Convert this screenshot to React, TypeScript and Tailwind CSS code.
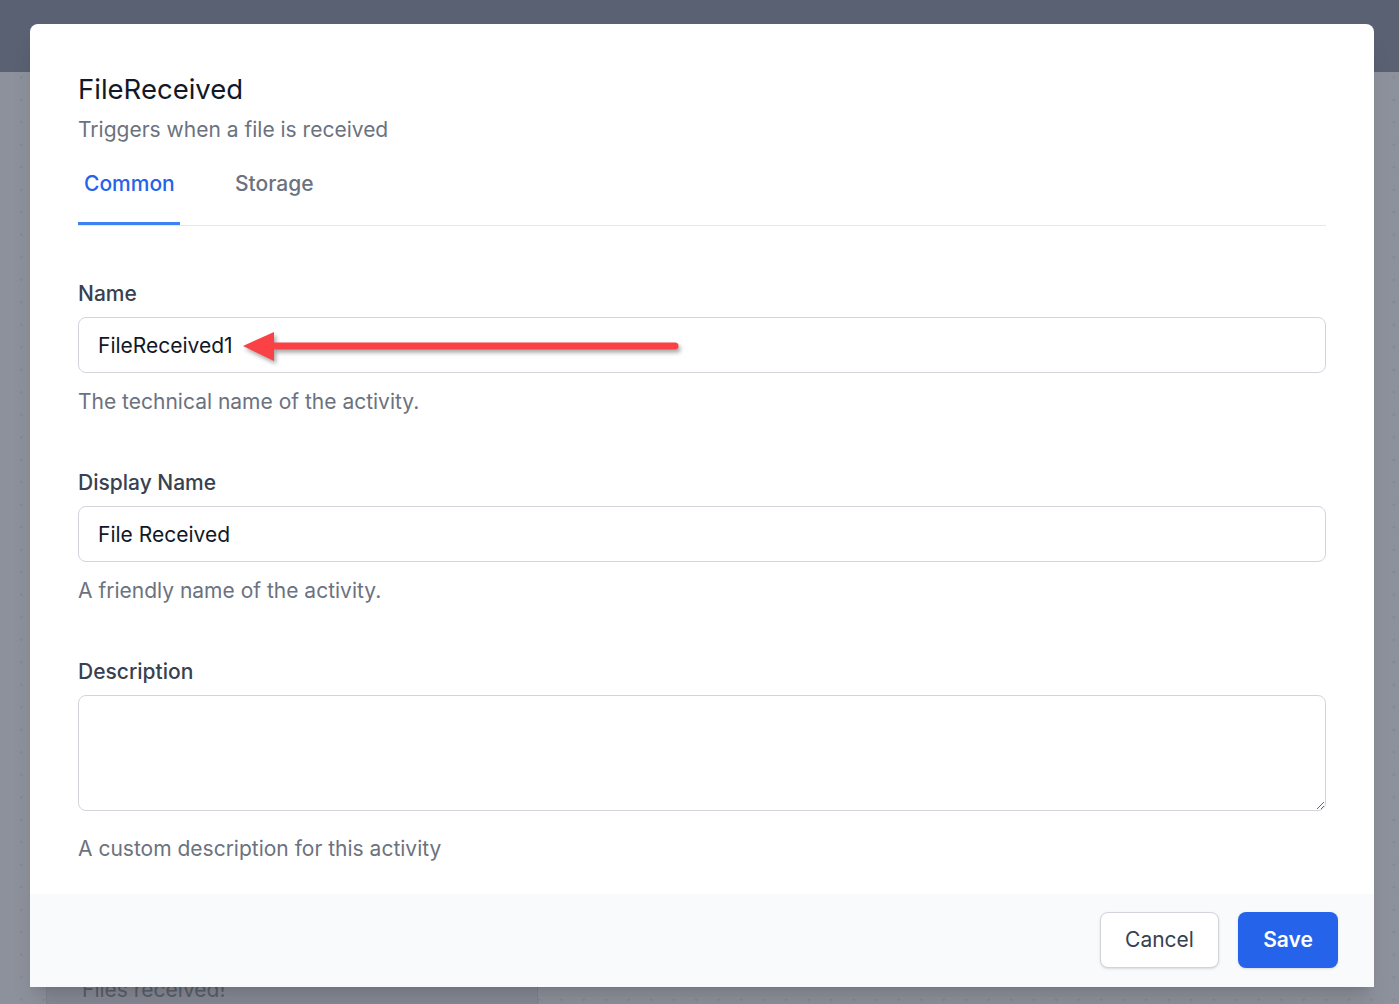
import React from 'react';

function Field({
  label,
  value,
  help,
  children,
}: {
  label: string;
  value?: string;
  help: string;
  children?: React.ReactNode;
}) {
  return (
    <div>
      <label className="block text-[21px] leading-7 pt-px -mb-px font-medium text-[#374151]">{label}</label>
      <div className="relative mt-[10px]">
        <input
          type="text"
          readOnly
          value={value}
          className="block w-full h-14 rounded-lg border border-[#d1d5db] px-[19px] text-[21px] text-[#111827] bg-white outline-none"
        />
        {children}
      </div>
      <p className="mt-[15px] -mb-px text-[21px] leading-7 text-[#6b7280]">{help}</p>
    </div>
  );
}

function Arrow() {
  return (
    <svg
      className="absolute left-[160px] top-[14px] pointer-events-none"
      width="460"
      height="40"
      viewBox="0 0 460 40"
      style={{ filter: 'drop-shadow(2px 3px 2px rgba(0,0,0,0.35))' }}
    >
      <line x1="30" y1="15" x2="437" y2="15" stroke="#fa4146" strokeWidth="7" strokeLinecap="round" />
      <polygon points="5,15 36,1 36,30" fill="#fa4146" />
    </svg>
  );
}

export default function App() {
  return (
    <div
      className="relative w-[1399px] h-[1004px] overflow-hidden bg-[#8d919b]"
      style={{ fontFamily: 'Inter, "Noto Sans", sans-serif' }}
    >
      {/* dimmed page behind the dialog */}
      <div className="h-[72px] bg-[#5a6172]" />
      <div className="h-[932px] bg-[radial-gradient(#838792_1.2px,transparent_1.3px)] bg-[size:22.5px_22.5px] bg-[position:10px_-6px] flex items-end pl-[46px]">
        <div className="w-[492px] h-[40px] bg-[#868a95] border-l border-r border-[#7f838e] pl-[35px] pt-[12px] text-[21px] leading-7 text-[#5b5f6a] overflow-hidden whitespace-nowrap">
          Files received!
        </div>
      </div>

      {/* dialog */}
      <div className="absolute left-[30px] top-[24px] w-[1344px] bg-white rounded-t-lg shadow-xl">
        <div className="px-12 pt-[49px] pb-8">
          <h2 className="text-[27.5px] leading-8 font-normal text-[#111827]">FileReceived</h2>
          <p className="mt-[11px] text-[21px] leading-7 text-[#6b7280]">Triggers when a file is received</p>

          <div className="mt-[26px] flex border-b border-[#e5e7eb]">
            <button className="px-[6px] pb-[24px] border-b-[3px] border-[#3b82f6] text-[21px] leading-7 font-medium text-[#2563eb] w-[102px] text-left whitespace-nowrap">
              Common
            </button>
            <button className="ml-[49px] px-[6px] pb-[24px] border-b-[3px] border-transparent text-[21px] leading-7 font-medium text-[#6b7280]">
              Storage
            </button>
          </div>

          <div className="mt-[53px] flex flex-col gap-[53px]">
            <Field label="Name" value="FileReceived1" help="The technical name of the activity.">
              <Arrow />
            </Field>
            <Field label="Display Name" value="File Received" help="A friendly name of the activity." />
            <div>
              <label className="block text-[21px] leading-7 pt-px -mb-px font-medium text-[#374151]">Description</label>
              <textarea
                readOnly
                className="mt-[10px] block w-full h-[116px] rounded-lg border border-[#d1d5db] px-5 py-3 text-[21px] text-[#111827] bg-white outline-none"
              />
              <p className="mt-[24px] -mb-px text-[21px] leading-7 text-[#6b7280]">A custom description for this activity</p>
            </div>
          </div>
        </div>

        <div className="h-[93px] bg-[#f9fafb] flex items-start justify-end gap-[19px] pt-[18px] pr-9">
          <button className="w-[119px] h-14 rounded-lg border border-[#d1d5db] bg-white text-[21px] text-[#374151] shadow-sm">
            Cancel
          </button>
          <button className="w-[100px] h-14 rounded-lg bg-[#2563eb] text-[21px] font-semibold text-white shadow-sm">
            Save
          </button>
        </div>
      </div>
    </div>
  );
}
